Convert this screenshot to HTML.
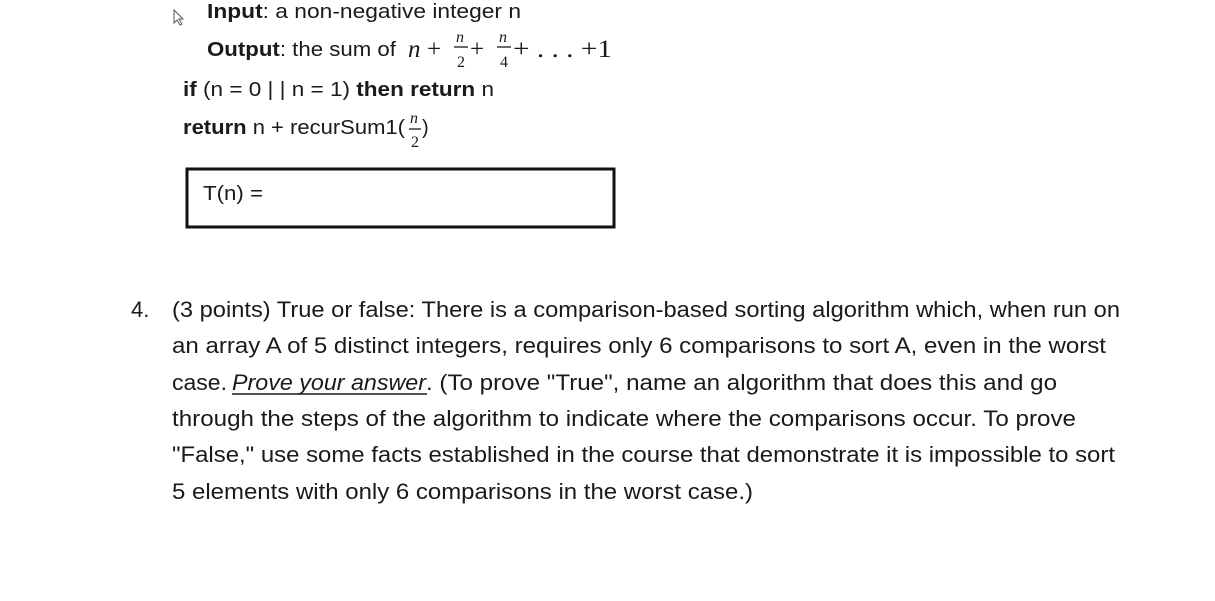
<!DOCTYPE html>
<html><head><style>
html,body{margin:0;padding:0;background:#fff;width:1215px;height:601px;overflow:hidden}
svg{display:block}
text{font-family:"Liberation Sans",sans-serif;fill:#1a1a1a}
.m{font-family:"Liberation Serif",serif;font-style:italic}
.r{font-family:"Liberation Serif",serif}
</style></head><body>
<svg width="1215" height="601" viewBox="0 0 1215 601">
<path d="M174 10 L174 23 L177 20 L180 25 L182 24 L179 19 L183 19 Z" fill="#fff" stroke="#555" stroke-width="1"/>
<text x="207" y="18" font-size="20" textLength="314" lengthAdjust="spacingAndGlyphs"><tspan font-weight="bold">Input</tspan>: a non-negative integer n</text>
<text x="207" y="56" font-size="20" textLength="189" lengthAdjust="spacingAndGlyphs"><tspan font-weight="bold">Output</tspan>: the sum of</text>
<text x="408" y="57" font-size="25" class="m">n</text>
<text x="427" y="57" font-size="25" class="r">+</text>
<text x="456" y="42" font-size="16" class="m">n</text>
<line x1="454" y1="47" x2="468" y2="47" stroke="#1a1a1a" stroke-width="1.3"/>
<text x="457" y="67" font-size="16" class="r">2</text>
<text x="470" y="57" font-size="25" class="r">+</text>
<text x="499" y="42" font-size="16" class="m">n</text>
<line x1="497" y1="47" x2="511" y2="47" stroke="#1a1a1a" stroke-width="1.3"/>
<text x="500" y="67" font-size="16" class="r">4</text>
<text x="513" y="57" font-size="25" class="r" textLength="99" lengthAdjust="spacingAndGlyphs">+ . . . +1</text>
<text x="183" y="96" font-size="20" textLength="311" lengthAdjust="spacingAndGlyphs"><tspan font-weight="bold">if</tspan> (n = 0 | | n = 1) <tspan font-weight="bold">then return</tspan> n</text>
<text x="183" y="134" font-size="20" textLength="222" lengthAdjust="spacingAndGlyphs"><tspan font-weight="bold">return</tspan> n + recurSum1(</text>
<text x="410" y="123" font-size="16" class="m">n</text>
<line x1="409" y1="129" x2="421" y2="129" stroke="#1a1a1a" stroke-width="1.3"/>
<text x="411" y="147" font-size="16" class="r">2</text>
<text x="422" y="134" font-size="20">)</text>
<rect x="187" y="169" width="427" height="58" fill="none" stroke="#111" stroke-width="3"/>
<text x="203" y="200" font-size="20" textLength="60" lengthAdjust="spacingAndGlyphs">T(n) =</text>
<g font-size="22">
<text x="131" y="317">4.</text>
<text x="172" y="317" textLength="948" lengthAdjust="spacingAndGlyphs">(3 points) True or false: There is a comparison-based sorting algorithm which, when run on</text>
<text x="172" y="353" textLength="934" lengthAdjust="spacingAndGlyphs">an array A of 5 distinct integers, requires only 6 comparisons to sort A, even in the worst</text>
<text x="172" y="390" textLength="55" lengthAdjust="spacingAndGlyphs">case.</text>
<text x="232" y="390" font-style="italic" textLength="194" lengthAdjust="spacingAndGlyphs">Prove your answer</text>
<line x1="232" y1="394" x2="427" y2="394" stroke="#1a1a1a" stroke-width="1.5"/>
<text x="426" y="390" textLength="631" lengthAdjust="spacingAndGlyphs">. (To prove "True", name an algorithm that does this and go</text>
<text x="172" y="426" textLength="904" lengthAdjust="spacingAndGlyphs">through the steps of the algorithm to indicate where the comparisons occur. To prove</text>
<text x="172" y="462" textLength="943" lengthAdjust="spacingAndGlyphs">"False," use some facts established in the course that demonstrate it is impossible to sort</text>
<text x="172" y="499" textLength="581" lengthAdjust="spacingAndGlyphs">5 elements with only 6 comparisons in the worst case.)</text>
</g>
</svg>
</body></html>
